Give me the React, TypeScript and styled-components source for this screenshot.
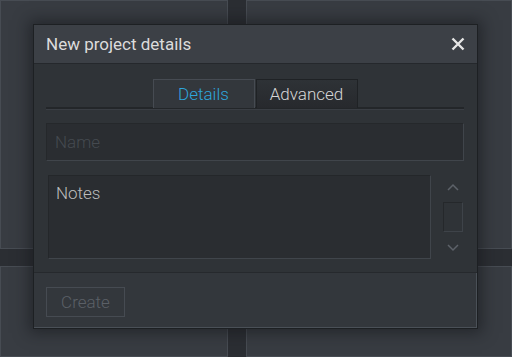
import React from 'react';
import styled, { createGlobalStyle } from 'styled-components';

const Global = createGlobalStyle`
  html, body {
    margin: 0;
    padding: 0;
    background: #2c2f34;
    font-family: Roboto, "Liberation Sans", sans-serif;
  }
`;

const Desktop = styled.div`
  position: relative;
  width: 512px;
  height: 357px;
  overflow: hidden;
  display: grid;
  grid-template-columns: 228px 1fr;
  grid-template-rows: 249px 1fr;
  column-gap: 18px;
  row-gap: 17px;
  background: #2b2e33;
`;

const Panel = styled.div`
  background: #383c42;
  border: 1px solid #474c53;
`;

const Dialog = styled.div`
  position: absolute;
  left: 33px;
  top: 24px;
  width: 445px;
  height: 305px;
  box-sizing: border-box;
  display: flex;
  flex-direction: column;
  background: #33373c;
  border: 1px solid #1d2023;
  box-shadow: inset -1px -1px 0 #4a5057, 0 0 14px 4px rgba(20, 22, 25, 0.55);
`;

const TitleBar = styled.div`
  height: 38px;
  display: flex;
  align-items: center;
  justify-content: space-between;
  padding: 0 12px;
  background: #3c4046;
  border-bottom: 1px solid #25282c;
`;

const Title = styled.div`
  color: #dcdcdc;
  font-size: 17px;
  font-weight: 400;
`;

const Close = styled.svg`
  width: 14px;
  height: 14px;
`;

const Body = styled.div`
  height: 209px;
  box-sizing: border-box;
  background: #2f3337;
  border-bottom: 1px solid #26292d;
  padding: 15px 13px 0 12px;
  display: flex;
  flex-direction: column;
`;

const TabRow = styled.div`
  display: flex;
  justify-content: center;
  border-bottom: 2px solid #232629;
  box-shadow: 0 1px 0 #3a3e44;
`;

const Tab = styled.div<{ $active?: boolean }>`
  width: 102px;
  height: 29px;
  box-sizing: border-box;
  display: flex;
  align-items: center;
  justify-content: center;
  font-size: 17px;
  font-weight: 300;
  color: ${p => (p.$active ? '#2ea6dc' : '#d6d6d6')};
  background: ${p => (p.$active ? '#33373c' : 'linear-gradient(#2e3236, #27292d)')};
  border: 1px solid ${p => (p.$active ? '#464b52' : '#1f2225')};
  border-bottom: none;
  margin-bottom: -1px;
  & + & {
    margin-left: 1px;
  }
`;

const NameInput = styled.div`
  margin-top: 14px;
  height: 38px;
  box-sizing: border-box;
  background: #2a2d31;
  border: 1px solid #25282b;
  border-right-color: #40454b;
  border-bottom-color: #40454b;
  display: flex;
  align-items: center;
  padding-left: 8px;
  font-size: 17px;
  font-weight: 300;
  color: #454a50;
`;

const NotesRow = styled.div`
  margin-top: 14px;
  display: flex;
  gap: 12px;
`;

const Notes = styled.div`
  margin-left: 2px;
  width: 383px;
  height: 84px;
  box-sizing: border-box;
  background: #2a2d31;
  border: 1px solid #24272a;
  border-right-color: #40454b;
  border-bottom-color: #40454b;
  padding: 7px 7px;
  font-size: 17px;
  font-weight: 300;
  color: #bdbdbd;
`;

const Scroll = styled.div`
  width: 20px;
  display: flex;
  flex-direction: column;
  align-items: center;
  padding-top: 8px;
`;

const Arrow = styled.svg`
  width: 12px;
  height: 8px;
`;

const Thumb = styled.div`
  margin: 11px 0 12px;
  width: 20px;
  height: 30px;
  box-sizing: border-box;
  border: 1px solid #25282b;
  border-right-color: #3e4349;
  border-bottom-color: #3e4349;
`;

const Footer = styled.div`
  flex: 1;
  padding: 14px 12px 0;
`;

const Button = styled.div`
  width: 79px;
  height: 30px;
  box-sizing: border-box;
  border: 1px solid #464b52;
  display: flex;
  align-items: center;
  justify-content: center;
  font-size: 17px;
  font-weight: 300;
  color: #5b6067;
`;

export default function App() {
  return (
    <>
      <Global />
      <Desktop>
        <Panel />
        <Panel />
        <Panel />
        <Panel />
        <Dialog>
          <TitleBar>
            <Title>New project details</Title>
            <Close viewBox="0 0 14 14">
              <path d="M1.5 1.5 L12.5 12.5 M12.5 1.5 L1.5 12.5" stroke="#e6e6e6" strokeWidth="2.4" />
            </Close>
          </TitleBar>
          <Body>
            <TabRow>
              <Tab $active>Details</Tab>
              <Tab>Advanced</Tab>
            </TabRow>
            <NameInput>Name</NameInput>
            <NotesRow>
              <Notes>Notes</Notes>
              <Scroll>
                <Arrow viewBox="0 0 12 8">
                  <path d="M1 7 L6 2 L11 7" stroke="#5d6269" strokeWidth="1.5" fill="none" />
                </Arrow>
                <Thumb />
                <Arrow viewBox="0 0 12 8">
                  <path d="M1 1 L6 6 L11 1" stroke="#5d6269" strokeWidth="1.5" fill="none" />
                </Arrow>
              </Scroll>
            </NotesRow>
          </Body>
          <Footer>
            <Button>Create</Button>
          </Footer>
        </Dialog>
      </Desktop>
    </>
  );
}
